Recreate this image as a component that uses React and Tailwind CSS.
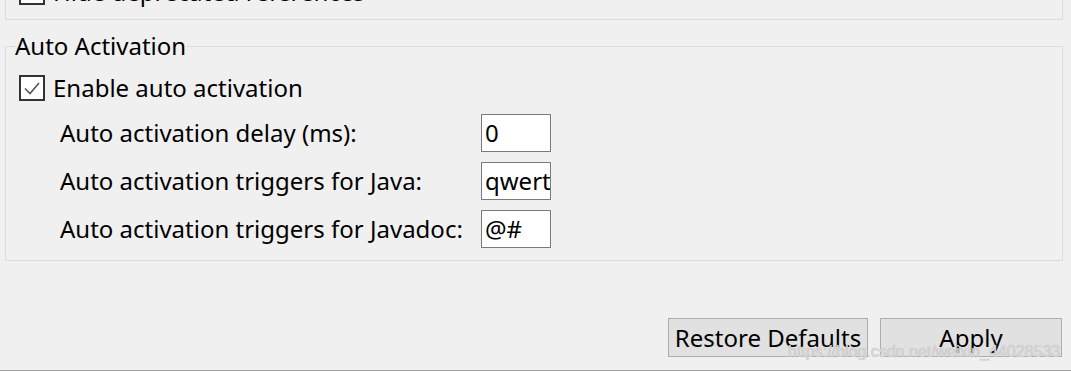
import React from "react";

function CheckBox({ checked }) {
  return (
    <span className="flex items-center justify-center w-[26px] h-[26px] border-2 border-[#333333] bg-white shrink-0">
      {checked && (
        <svg width="20" height="20" viewBox="0 0 20 20">
          <path d="M3 10.5 L8 15.5 L17 5" fill="none" stroke="#555555" strokeWidth="1.6" />
        </svg>
      )}
    </span>
  );
}

function Field({ label, value }) {
  return (
    <div className="flex items-center h-[48px]">
      <div className="w-[475px] pl-[54px] whitespace-nowrap">{label}</div>
      <div className="w-[70px] h-[38px] border border-[#7a7a7a] bg-white pl-[3px] flex items-center overflow-hidden whitespace-nowrap">
        {value}
      </div>
    </div>
  );
}

export default function App() {
  return (
    <div
      className="relative w-[1071px] h-[371px] bg-[#f0f0f0] overflow-hidden text-[24px] text-black"
      style={{ fontFamily: '"Noto Sans", "Open Sans", sans-serif' }}
    >
      {/* previous group, scrolled mostly out of view */}
      <div className="ml-[5px] w-[1058px] h-[20px] flex items-start border-x border-b border-[#dcdcdc]">
        <div className="-mt-[21px] ml-[13px] flex items-center gap-[8px] leading-[26px]">
          <CheckBox />
          <span>Hide deprecated references</span>
        </div>
      </div>

      {/* Auto Activation */}
      <fieldset className="mt-[10px] ml-[5px] w-[1058px] border border-[#dcdcdc] pb-[7px]">
        <legend className="ml-[9px] leading-[32px]">Auto Activation</legend>
        <div className="mt-[10px] ml-[13px] flex items-center gap-[8px] h-[32px]">
          <CheckBox checked />
          <span>Enable auto activation</span>
        </div>
        <div className="mt-[5px]">
          <Field label="Auto activation delay (ms):" value="0" />
          <Field label="Auto activation triggers for Java:" value="qwert" />
          <Field label="Auto activation triggers for Javadoc:" value="@#" />
        </div>
      </fieldset>

      {/* buttons */}
      <div className="mt-[57px] flex justify-end gap-[12px] pr-[9px]">
        <button className="w-[200px] h-[39px] bg-[#e1e1e1] border border-[#adadad] leading-none">
          Restore Defaults
        </button>
        <button className="w-[182px] h-[39px] bg-[#e1e1e1] border border-[#adadad] leading-none">
          Apply
        </button>
      </div>
      <div className="mt-[13px] border-t border-[#a0a0a0]" />

      {/* watermark */}
      <div
        className="absolute left-[788px] top-[344px] text-[16px] leading-none text-[#d4d4d4] whitespace-nowrap"
        style={{ fontFamily: '"Liberation Sans", Arial, sans-serif', textShadow: "0 0 1px #b8b8b8" }}
      >
        https://blog.csdn.net/weixin_44028533
      </div>
    </div>
  );
}
